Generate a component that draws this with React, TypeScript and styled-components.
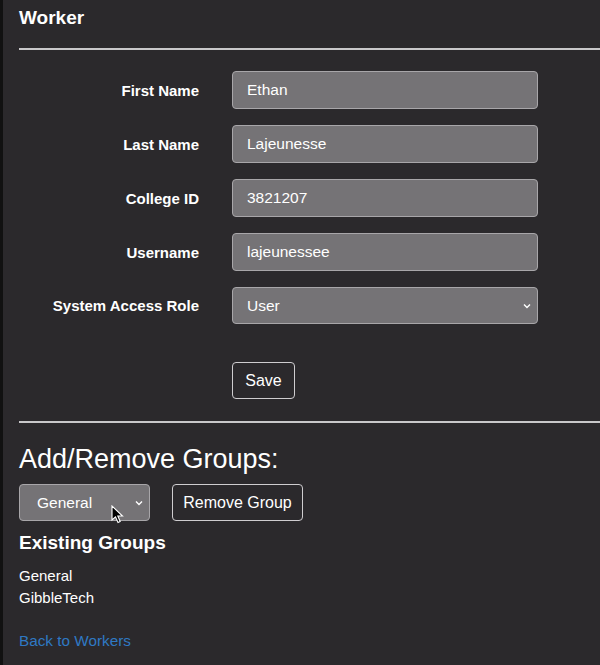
import React from "react";
import styled, { createGlobalStyle } from "styled-components";

const Global = createGlobalStyle`
  html, body { margin: 0; padding: 0; background: #2b292c; }
  body { font-family: "Liberation Sans", Arial, sans-serif; color: #fff; }
  * { box-sizing: border-box; }
`;

const Page = styled.div`
  min-height: 665px;
  border-left: 3px solid #111;
  padding: 7px 0 12px 16px;
  position: relative;
`;

const Title = styled.h1`
  margin: 0;
  font-size: 19px;
  line-height: 22px;
  font-weight: bold;
`;

const Rule = styled.hr<{ $top: number; $bottom: number }>`
  border: none;
  border-top: 2px solid #c9c8ca;
  margin: ${(p) => p.$top}px 0 ${(p) => p.$bottom}px 0;
`;

const Form = styled.div`
  display: grid;
  grid-template-columns: 180px 306px;
  column-gap: 33px;
  row-gap: 16px;
  align-items: center;
`;

const Label = styled.label`
  text-align: right;
  font-size: 15px;
  font-weight: bold;
`;

const Field = styled.div<{ $w?: number; $h?: number; $pl?: number }>`
  width: ${(p) => p.$w ?? 306}px;
  height: ${(p) => p.$h ?? 38}px;
  background: #757376;
  border: 1px solid #a8a6a9;
  border-radius: 4px;
  display: flex;
  align-items: center;
  padding: 0 6px 0 ${(p) => p.$pl ?? 14}px;
  font-size: 15.5px;
  color: #fff;
`;

const FieldText = styled.span`
  flex: 1;
`;

const Chevron = () => (
  <svg width="8" height="6" viewBox="0 0 8 6">
    <path d="M1 1.5 L4 4.5 L7 1.5" stroke="#fff" strokeWidth="1.4" fill="none" />
  </svg>
);

const Button = styled.button<{ $w: number }>`
  width: ${(p) => p.$w}px;
  height: 37px;
  background: transparent;
  border: 1px solid #cfcdd0;
  border-radius: 4px;
  color: #fff;
  font-family: "Liberation Sans", Arial, sans-serif;
  font-size: 16px;
  padding: 0;
`;

const SaveCell = styled.div`
  grid-column: 2;
  margin-top: 22px;
`;

const H2 = styled.h2`
  margin: 0;
  font-size: 27px;
  line-height: 32px;
  font-weight: normal;
`;

const GroupRow = styled.div`
  display: flex;
  gap: 22px;
  margin-top: 9px;
  position: relative;
`;

const H3 = styled.h3`
  margin: 9px 0 0 0;
  font-size: 19px;
  line-height: 26px;
  font-weight: bold;
`;

const List = styled.div`
  margin-top: 9px;
  font-size: 15px;
  line-height: 22px;
`;

const BackLink = styled.a`
  display: block;
  margin-top: 21px;
  font-size: 15.3px;
  line-height: 22px;
  color: #2f79c4;
  text-decoration: none;
`;

const Cursor = styled.svg`
  position: absolute;
  left: 92px;
  top: 21px;
`;

const fields = [
  ["First Name", "Ethan"],
  ["Last Name", "Lajeunesse"],
  ["College ID", "3821207"],
  ["Username", "lajeunessee"],
];

export default function App() {
  return (
    <Page>
      <Global />
      <Title>Worker</Title>
      <Rule $top={19} $bottom={21} />
      <Form>
        {fields.map(([l, v]) => (
          <React.Fragment key={l}>
            <Label>{l}</Label>
            <Field>
              <FieldText>{v}</FieldText>
            </Field>
          </React.Fragment>
        ))}
        <Label>System Access Role</Label>
        <Field $h={37}>
          <FieldText>User</FieldText>
          <Chevron />
        </Field>
        <SaveCell>
          <Button $w={63}>Save</Button>
        </SaveCell>
      </Form>
      <Rule $top={22} $bottom={20} />
      <H2>Add/Remove Groups:</H2>
      <GroupRow>
        <Field $w={131} $h={37} $pl={17}>
          <FieldText>General</FieldText>
          <Chevron />
        </Field>
        <Button $w={131}>Remove Group</Button>
        <Cursor width="14" height="20" viewBox="0 0 14 20">
          <path d="M1 1 L1 15 L4.5 11.8 L7 17.5 L9.2 16.5 L6.8 11 L11.5 11 Z" fill="#000" stroke="#fff" strokeWidth="1.1" />
        </Cursor>
      </GroupRow>
      <H3>Existing Groups</H3>
      <List>
        <div>General</div>
        <div>GibbleTech</div>
      </List>
      <BackLink href="#">Back to Workers</BackLink>
    </Page>
  );
}
